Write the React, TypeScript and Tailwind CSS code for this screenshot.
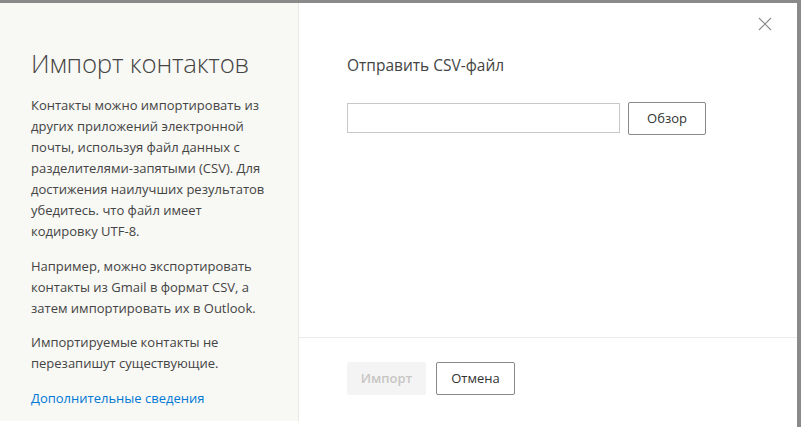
import React from "react";

export default function App() {
  const font = { fontFamily: '"Open Sans", "Noto Sans", sans-serif' };
  return (
    <div className="w-[801px] h-[427px] bg-[#8a8a8a] pt-[3px] overflow-hidden" style={font}>
      <div className="w-[797px] h-[424px] bg-white flex items-start">
        <aside className="w-[299px] h-[418px] shrink-0 bg-[#f8f8f5] border-r border-[#ebe9e4] pl-[31px] pr-[33px] pt-[42px] text-[#444]">
          <h1 className="text-[25.8px] font-light leading-[36px] text-[#444] tracking-[-0.2px] whitespace-nowrap">Импорт контактов</h1>
          <p className="mt-[14px] text-[13px] leading-[21px]">
            Контакты можно импортировать из других приложений электронной почты, используя файл данных с разделителями-запятыми (CSV). Для достижения наилучших результатов убедитесь. что файл имеет кодировку UTF-8.
          </p>
          <p className="mt-[14px] text-[13px] leading-[21px]">
            Например, можно экспортировать контакты из Gmail в формат CSV, а затем импортировать их в Outlook.
          </p>
          <p className="mt-[13px] text-[13px] leading-[21px]">
            Импортируемые контакты не перезапишут существующие.
          </p>
          <a className="block mt-[14px] text-[13px] leading-[21px] text-[#0078d4]">Дополнительные сведения</a>
        </aside>
        <section className="flex-1 h-[424px] flex flex-col relative">
          <button className="absolute right-[24px] top-[13px] w-[16px] h-[16px] flex items-center justify-center text-[#8a8a8a]">
            <svg width="14" height="14" viewBox="0 0 14 14" fill="none" stroke="currentColor" strokeWidth="1.1">
              <path d="M1 1 L13 13 M13 1 L1 13" />
            </svg>
          </button>
          <div className="h-[335px] border-b border-[#edebe8] pl-[48px] pt-[51px]">
            <div className="text-[15.5px] leading-[22px] text-[#444]">Отправить CSV-файл</div>
            <div className="mt-[26px] flex items-start gap-[8px]">
              <div className="mt-[1px] w-[273px] h-[30px] border border-[#c8c8c8] bg-white" />
              <button className="w-[78px] h-[33px] border border-[#8a8886] rounded-[2px] bg-white text-[13px] text-[#333]">Обзор</button>
            </div>
          </div>
          <div className="pl-[48px] pt-[24px] flex gap-[10px]">
            <button className="w-[79px] h-[33px] rounded-[2px] bg-[#f4f4f4] text-[13px] font-semibold text-[#c8c6c4]">Импорт</button>
            <button className="w-[79px] h-[33px] rounded-[2px] border border-[#8a8886] bg-white text-[13px] text-[#333]">Отмена</button>
          </div>
        </section>
      </div>
    </div>
  );
}
